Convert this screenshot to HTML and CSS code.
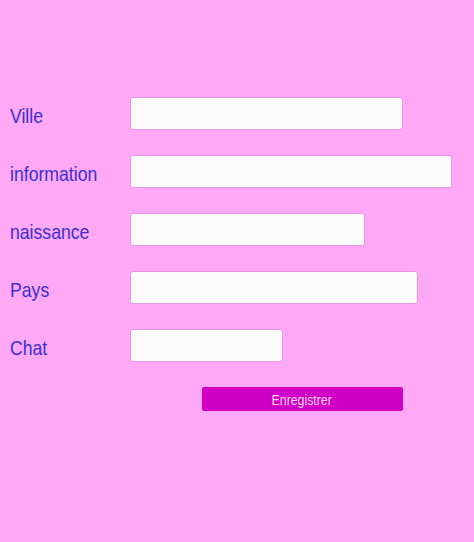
FILE: index.html
```html
<!DOCTYPE html>
<html lang="fr">
<head>
<meta charset="utf-8">
<title>Formulaire</title>
<link rel="stylesheet" href="styles.css">
</head>
<body>
<form class="form">
  <div class="row">
    <label class="label"><span class="txt">Ville</span></label>
    <input class="field w-ville" type="text">
  </div>
  <div class="row">
    <label class="label"><span class="txt">information</span></label>
    <input class="field w-info" type="text">
  </div>
  <div class="row">
    <label class="label"><span class="txt">naissance</span></label>
    <input class="field w-naiss" type="text">
  </div>
  <div class="row">
    <label class="label"><span class="txt">Pays</span></label>
    <input class="field w-pays" type="text">
  </div>
  <div class="row">
    <label class="label"><span class="txt">Chat</span></label>
    <input class="field w-chat" type="text">
  </div>
  <div class="actions">
    <button class="btn" type="button"><span class="btn-txt">Enregistrer</span></button>
  </div>
</form>
</body>
</html>
```
FILE: styles.css
```css
html, body {
  margin: 0;
  padding: 0;
  background: #ffa8f6;
  font-family: "Liberation Sans", Arial, sans-serif;
}
.form {
  display: flex;
  flex-direction: column;
  gap: 25px;
  padding: 97px 0 0 10px;
}
.row {
  display: flex;
  align-items: center;
  height: 33px;
}
.label {
  width: 120px;
  flex: none;
  color: #3a2fd2;
  font-size: 21px;
  line-height: 33px;
  padding-top: 4px;
}
.txt {
  display: inline-block;
  transform: scaleX(0.84);
  transform-origin: left center;
}
.field {
  box-sizing: border-box;
  height: 33px;
  margin: 0;
  padding: 0 6px;
  background: #fafafa;
  border: 1px solid #e497e4;
  border-radius: 3px;
  outline: none;
}
.w-ville { width: 273px; }
.w-info { width: 322px; }
.w-naiss { width: 235px; }
.w-pays { width: 288px; }
.w-chat { width: 153px; }
.actions {
  display: flex;
  padding-left: 192px;
}
.btn {
  box-sizing: border-box;
  width: 201px;
  height: 24px;
  margin: 0;
  padding: 0 2px 0 0;
  background: #d200c6;
  border: none;
  border-radius: 2px;
  color: #f6d6f2;
  font-family: "Liberation Sans", Arial, sans-serif;
  font-size: 15px;
  display: flex;
  align-items: center;
  justify-content: center;
}
.btn-txt {
  display: inline-block;
  transform: scaleX(0.82);
}
```
